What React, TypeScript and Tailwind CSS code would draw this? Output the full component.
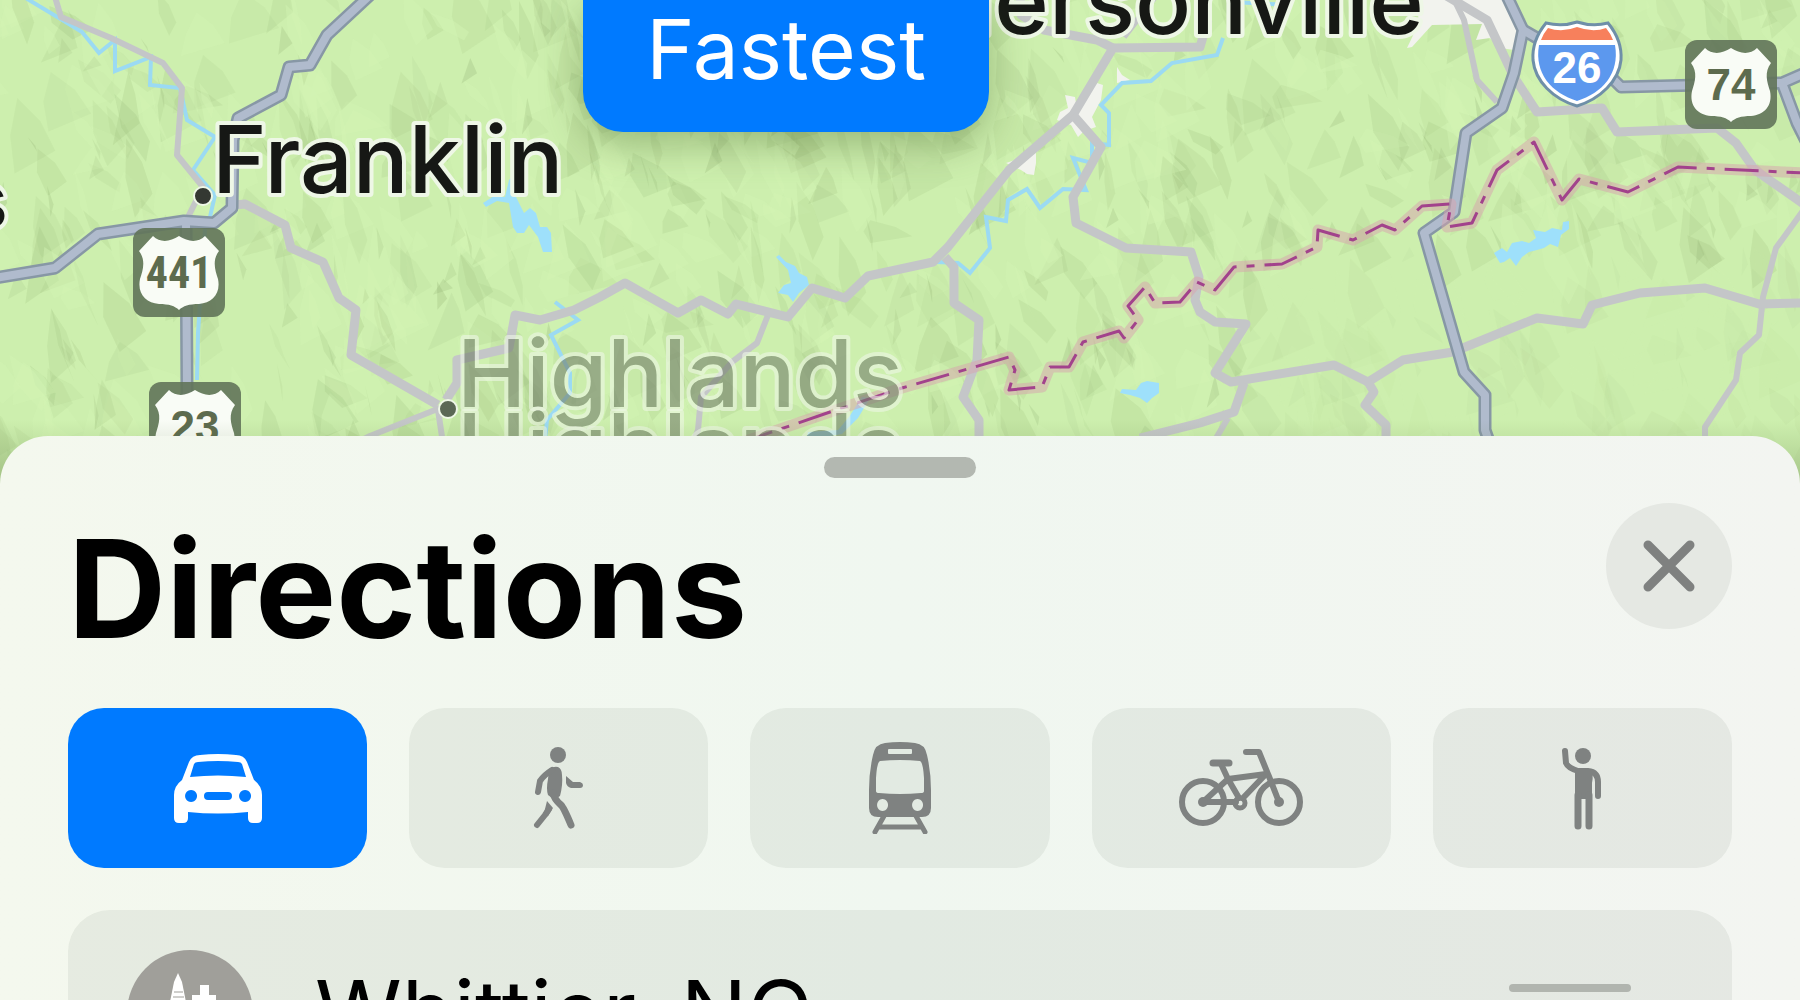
import { useState } from 'react'
import type { ReactNode } from 'react'

const highways = [
  'M-5 278 L55 268 L98 234 L184 221 L214 223 L232 208 L233 140 L238 118 L281 95 L289 67 L310 65 L327 35 L370 -5',
  'M186 222 L187 393 L189 450',
  'M1505 -8 L1523 30 L1514 73 L1502 108 L1466 133 L1454 212 L1424 233 L1464 372 L1485 395 L1485 430 L1492 450',
  'M1523 30 L1537 38 L1606 72 L1621 87 L1782 83 L1805 73',
  'M1782 83 L1797 123 L1808 145',
]

const roads = [
  'M235 205 L245 204 L285 225 L291 248 L323 262 L339 298 L356 310 L351 355 L438 405',
  'M446 400 L457 383 L457 360 L509 348 L515 315 L540 320 L574 310 L600 297 L625 283 L678 313 L701 300 L728 314 L736 304 L788 317 L812 288 L845 298 L868 276 L933 262 L948 247 L1009 170 L1073 115 L1113 48 L1200 47 L1208 20',
  'M1113 48 L1097 40 L1044 30 L1021 15 L1020 -5',
  'M945 257 L954 267 L954 303 L979 320 L977 360 L963 397 L979 420 L979 450',
  'M1073 115 L1101 147 L1073 197 L1076 223 L1126 248 L1191 252 L1199 277 L1195 300 L1200 312 L1215 322 L1246 324 L1215 373 L1231 382 L1334 365 L1368 382 L1403 360 L1453 352 L1537 318 L1583 324 L1592 305 L1640 293 L1705 288 L1759 304 L1805 303',
  'M1244 383 L1234 412 L1200 423 L1140 438',
  'M1368 382 L1374 392 L1365 405 L1386 425 L1386 450',
  'M1445 -5 L1487 20 L1514 77 L1537 112 L1602 108 L1617 132 L1717 128 L1736 143 L1755 170 L1805 205',
]

const lanes = [
  'M55 -3 L61 17 L111 38 L163 63 L182 88 L177 155 L203 187 L188 217',
  'M440 408 L370 436 L350 446',
  'M438 410 L444 450',
  'M768 315 L757 343 L732 362 L701 397 L698 430 L690 450',
  'M1124 37 L1155 -3',
  'M1228 418 L1212 445',
  'M1805 208 L1776 248 L1763 297 L1759 335 L1740 353 L1736 380 L1705 427 L1705 450',
  'M1453 -3 L1464 20 L1477 80 L1497 102',
]

const rivers = [
  'M24 -3 L59 18 L82 32 L99 53 L115 40 L115 71 L151 57 L150 85 L180 88 L187 120 L215 137 L193 170 L215 195 L210 217 L205 230 L198 333 L197 380',
  'M555 302 L578 320 L551 335 L570 373 L570 393 L547 420 L545 440',
  'M937 262 L958 263 L970 273 L990 248 L986 217 L1006 221 L1008 200 L1027 189 L1040 208 L1063 189 L1086 190 L1073 158 L1092 163 L1092 143 L1109 145 L1109 113 L1101 105 L1122 83 L1151 81 L1172 63 L1217 55 L1223 38',
  'M1231 2 L1292 5',
]

const lakes = [
  '505,197 509,180 513,176 516,197 524,213 530,208 536,213 540,227 547,227 551,233 552,252 543,252 538,237 529,225 524,233 517,233 513,227 509,203 497,201 486,207 483,203 494,196',
  '776,257 779,255 786,262 795,266 799,273 807,277 809,285 799,293 793,302 788,295 778,293 784,285 791,283 788,270',
  '1120,393 1122,389 1136,390 1141,383 1147,381 1159,383 1159,393 1152,398 1147,403 1140,398 1130,395',
  '1494,253 1502,248 1507,252 1512,243 1522,241 1529,243 1536,238 1533,230 1545,232 1552,228 1562,230 1563,222 1569,221 1569,229 1561,235 1558,247 1550,244 1544,248 1537,250 1529,252 1522,257 1516,266 1510,258 1504,262 1500,263',
  '849,417 862,397 870,398 858,418 842,434 806,440 808,432 838,430',
]

const towns = [
  '1419,-5 1418,25 1407,48 1412,47 1432,25 1482,24 1476,40 1490,38 1500,48 1514,50 1520,30 1508,-5',
  '1065,95 1075,97 1076,103 1097,83 1103,85 1101,100 1092,117 1096,127 1084,131 1078,137 1071,125 1057,120 1060,112 1068,108',
  '1006,163 1036,153 1036,163 1034,175 1027,174 1021,170',
  '1117,67 1122,75 1130,80 1117,83',
]

const stateLine =
  'M740 443 L830 412 L902 388 L1009 357 L1015 370 L1009 390 L1042 387 L1050 367 L1069 367 L1083 342 L1119 331 L1124 338 L1138 320 L1128 306 L1145 287 L1155 303 L1180 302 L1197 282 L1215 290 L1234 267 L1282 264 L1317 247 L1318 230 L1353 240 L1382 225 L1395 230 L1422 206 L1451 204 L1447 227 L1472 223 L1497 170 L1534 142 L1562 200 L1579 179 L1628 192 L1678 167 L1805 173'

// Seeded so the hills land in the same place on every render
function makeHills() {
  let seed = 20
  const rand = () => {
    seed = (seed * 16807) % 2147483647
    return seed / 2147483647
  }
  const hills: { points: string; fill: string; opacity: number }[] = []
  for (let i = 0; i < 900; i++) {
    const x = rand() * 1840 - 20
    const y = rand() * 520 - 40
    const w = 10 + rand() * 34
    const h = 22 + rand() * 58
    const lean = rand() * 50 - 30
    const light = rand() < 0.45
    const calm = x > 1250 && y > 240
    hills.push({
      points: `${x},${y} ${x + w * 0.6},${y + h * 0.3} ${x + w},${y + h * 0.7} ${x + w * 0.4 + lean},${y + h} ${x + lean * 0.4},${y + h * 0.5}`,
      fill: light ? '#d3f5b3' : '#86a565',
      opacity: (light ? 0.45 : 0.06 + rand() * 0.09) * (calm ? 0.35 : 1),
    })
  }
  // Small sharp shadows on the steep slopes
  for (let i = 0; i < 170; i++) {
    const x = rand() * 1800
    const y = rand() * 440
    const h = 14 + rand() * 24
    const lean = rand() * 24 - 12
    const calm = x > 1250 && y > 240
    hills.push({
      points: `${x},${y} ${x + 4 + rand() * 7},${y + h * 0.6} ${x + lean},${y + h}`,
      fill: '#78955a',
      opacity: calm ? 0.04 : 0.08 + rand() * 0.1,
    })
  }
  return hills
}

const hills = makeHills()

function UsShield({ x, y, label, narrow }: { x: number; y: number; label: string; narrow?: boolean }) {
  return (
    <g transform={`translate(${x} ${y})`}>
      <rect width="92" height="89" rx="12" fill="#62745a" opacity="0.9" />
      <path
        d="M20 8 C27 15 37 14 46 8 C55 14 65 15 72 8 L86 23 C79 32 82 42 85 51 C88 66 79 75 66 76 C56 76 50 78 46 82 C42 78 36 76 26 76 C13 75 4 66 7 51 C10 42 13 32 6 23 Z"
        fill="#f9fcf6"
      />
      <text
        x="46"
        y="60"
        textAnchor="middle"
        fill="#5d6b4e"
        className={
          narrow
            ? "font-['Liberation_Sans_Narrow','Roboto_Condensed',Roboto,sans-serif] text-[44px] font-bold"
            : "font-['Liberation_Sans',sans-serif] text-[44px] font-bold"
        }
      >
        {label}
      </text>
    </g>
  )
}

function InterstateShield() {
  return (
    <g>
      <path
        d="M1546 23 Q1562 27 1577 22 Q1593 27 1608 23 C1617 34 1622 46 1621 60 C1619 81 1600 99 1577 106 C1553 99 1535 81 1533 60 C1532 46 1537 34 1546 23Z"
        fill="#fff"
        stroke="#6f8fa8"
        strokeWidth="3"
      />
      <path d="M1548 28 Q1562 33 1577 27 Q1593 33 1606 28 Q1611 34 1613 40 H1541 Q1543 34 1548 28Z" fill="#f7805c" />
      <path d="M1539 45 H1615 C1620 74 1602 93 1577 101 C1552 93 1534 74 1539 45Z" fill="#5c98ee" />
      <text x="1577" y="83" textAnchor="middle" fill="#fff" className="font-['Liberation_Sans',sans-serif] text-[44px] font-bold">
        26
      </text>
    </g>
  )
}

function TownLabel({ x, y, anchor = 'start', faded, small, children }: {
  x: number
  y: number
  anchor?: 'start' | 'end'
  faded?: boolean
  small?: boolean
  children: string
}) {
  return (
    <text
      x={x}
      y={y}
      textAnchor={anchor}
      fill={faded ? '#74806c' : '#161815'}
      stroke="#eef7e6"
      strokeWidth="8"
      strokeLinejoin="round"
      paintOrder="stroke"
      opacity={faded ? 0.6 : 1}
      className={small ? 'text-[76px] font-medium' : 'text-[93px] font-medium'}
    >
      {children}
    </text>
  )
}

function RouteMap() {
  return (
    <svg viewBox="0 0 1800 488" className="block w-full" role="img" aria-label="Route map">
      <defs>
        <linearGradient id="mapEdge" x1="0" y1="0" x2="0" y2="1">
          <stop offset="0" stopColor="#5f7a45" stopOpacity="0" />
          <stop offset="1" stopColor="#5f7a45" stopOpacity="0.35" />
        </linearGradient>
      </defs>
      <rect width="1800" height="488" fill="#cdefae" />
      {hills.map((hill, i) => (
        <polygon key={i} points={hill.points} fill={hill.fill} opacity={hill.opacity} />
      ))}
      {towns.map((points) => <polygon key={points} points={points} fill="#f2f3ee" />)}
      {rivers.map((d) => <path key={d} d={d} fill="none" stroke="#9bdaf3" strokeWidth="4" />)}
      {lakes.map((points) => <polygon key={points} points={points} fill="#9ee0fb" />)}
      <g fill="none" stroke="#c4c6c8" strokeLinejoin="round">
        {lanes.map((d) => <path key={d} d={d} strokeWidth="6" />)}
        {roads.map((d) => <path key={d} d={d} strokeWidth="9" />)}
      </g>
      <g fill="none" strokeLinejoin="round">
        {highways.map((d) => <path key={d} d={d} stroke="#8797a5" strokeWidth="13" />)}
        {highways.map((d) => <path key={d} d={d} stroke="#b0bbcd" strokeWidth="8" />)}
        <path d={stateLine} stroke="#d7a3ae" strokeWidth="11" opacity="0.5" />
        <path d={stateLine} stroke="#a2428c" strokeWidth="3" strokeDasharray="34 10 8 10" />
      </g>

      <UsShield x={133} y={228} label="441" narrow />
      <UsShield x={149} y={382} label="23" />
      <UsShield x={1685} y={40} label="74" />
      <InterstateShield />

      <circle cx="203" cy="196" r="9" fill="#343832" stroke="#eef7e6" strokeWidth="2" />
      <circle cx="448" cy="409" r="9" fill="#5b6855" stroke="#eef7e6" strokeWidth="2" />
      <TownLabel x={212} y={193}>Franklin</TownLabel>
      <TownLabel x={1424} y={34} anchor="end">Hendersonville</TownLabel>
      <TownLabel x={8} y={228} anchor="end" small>Robbins</TownLabel>
      <TownLabel x={457} y={407} faded>Highlands</TownLabel>
      <TownLabel x={457} y={481} faded>Highlands</TownLabel>
      <rect y="420" width="1800" height="68" fill="url(#mapEdge)" />
    </svg>
  )
}

function CarIcon() {
  return (
    <svg viewBox="0 0 90 72" className="h-[72px] w-[90px]" fill="currentColor" aria-hidden="true">
      <path
        fillRule="evenodd"
        d="M9 28 L16 10 Q19 3 27 3 Q45 1 63 3 Q71 3 74 10 L81 28 Q89 34 89 43 V66 Q89 71 84 71 H80 Q75 71 75 66 V60 Q45 63 15 60 V66 Q15 71 10 71 H6 Q1 71 1 66 V43 Q1 34 9 28Z M17 25 Q45 22 73 25 L69 12 Q68 10 65 10 Q45 8 25 10 Q22 10 21 12Z M18 38 a6 6 0 1 0 0.1 0Z M72 38 a6 6 0 1 0 0.1 0Z M35 40 H55 a4 4 0 0 1 0 8 H35 a4 4 0 0 1 0 -8Z"
      />
    </svg>
  )
}

function WalkIcon() {
  return (
    <svg viewBox="0 0 52 82" className="h-[82px] w-[52px]" fill="none" stroke="currentColor" strokeLinecap="round" strokeLinejoin="round" aria-hidden="true">
      <circle cx="25" cy="8" r="8" fill="currentColor" stroke="none" />
      <path d="M16 22 Q21 19 25 20 Q29 22 29 28 Q30 38 27 49 Q21 54 15 48 Q13 42 15 32Z" fill="currentColor" stroke="none" />
      <path d="M19 23 Q11 28 7 34 L5 45" strokeWidth="6" />
      <path d="M20 46 Q21 52 28 58 Q31 61 38 78" strokeWidth="7" />
      <path d="M16 62 L12 68 L4 78" strokeWidth="6" />
      <path d="M14 54 L20 61 L15 69 L11 66Z" fill="currentColor" stroke="none" />
      <path d="M33 29 L40 35 H47 Q50 36 50 38 Q50 41 47 41 H38 Q34 40 33 36Z" fill="currentColor" stroke="none" />
    </svg>
  )
}

function TramIcon() {
  return (
    <svg viewBox="0 0 64 92" className="h-[92px] w-[64px]" fill="currentColor" aria-hidden="true">
      <path
        fillRule="evenodd"
        d="M17 1 Q32 -1 47 1 Q57 2 59 13 Q63 30 63 48 V66 Q63 75 54 75 H10 Q1 75 1 66 V48 Q1 30 5 13 Q7 2 17 1Z M21 7 Q20 7 20 8 V11 Q20 12 21 12 H43 Q44 12 44 11 V8 Q44 7 43 7Z M12 19 Q9 20 8 36 V49 Q8 51 11 51 Q32 53 53 51 Q56 51 56 49 V36 Q55 20 52 19 Q32 17 12 19Z M14.500 57 a5.500 6 0 1 0 0.1 0Z M49.500 57 a5.500 6 0 1 0 0.1 0Z"
      />
      <path d="M16 74 L7 90 M48 74 L57 90 M11 85 H53" stroke="currentColor" strokeWidth="5" strokeLinecap="round" />
    </svg>
  )
}

function BikeIcon() {
  return (
    <svg viewBox="0 0 126 80" className="h-[80px] w-[126px]" fill="none" stroke="currentColor" strokeWidth="6" strokeLinecap="round" strokeLinejoin="round" aria-hidden="true">
      <circle cx="25" cy="54" r="21" />
      <circle cx="101" cy="54" r="21" />
      <path d="M68 4 H81 L92 31 L101 54" />
      <path d="M35 15 H51" strokeWidth="7" />
      <path d="M43 16 L50 31 L61 50 M50 31 L88 26 L65 50 M50 31 L25 54 H58" strokeWidth="6" />
      <circle cx="25" cy="54" r="5" fill="currentColor" stroke="none" />
      <circle cx="101" cy="54" r="5" fill="currentColor" stroke="none" />
      <circle cx="62" cy="55" r="5" strokeWidth="5" />
    </svg>
  )
}

function RideshareIcon() {
  return (
    <svg viewBox="0 0 42 83" className="h-[83px] w-[42px]" fill="none" stroke="currentColor" strokeLinecap="round" strokeLinejoin="round" aria-hidden="true">
      <circle cx="22" cy="9" r="8" fill="currentColor" stroke="none" />
      <path d="M4 4 L5 16 Q7 21 17 24 H27 Q37 25 37 35 V49" strokeWidth="6" />
      <path d="M14 22 H29 Q33 28 31 36 V52 H14Z" fill="currentColor" stroke="none" />
      <path d="M17 48 V79 M28 48 V79" strokeWidth="7" />
    </svg>
  )
}

function CityIcon() {
  return (
    <svg viewBox="0 0 126 126" className="size-[126px] shrink-0" aria-hidden="true">
      <circle cx="63" cy="63" r="63" fill="#a09f9a" />
      <g fill="#fff">
        <path d="M51 23 L55 32 L61 62 H41 L47 32Z" />
        <path d="M65 45 H73 V35 H82 V45 H89 V95 H65Z" />
        <path d="M38 60 H62 V95 H38Z" />
      </g>
      <path d="M47 42 H56 M46 47 H57" stroke="#a09f9a" strokeWidth="1" />
    </svg>
  )
}

const modes: { id: string; label: string; icon: ReactNode }[] = [
  { id: 'drive', label: 'Drive', icon: <CarIcon /> },
  { id: 'walk', label: 'Walk', icon: <WalkIcon /> },
  { id: 'transit', label: 'Transit', icon: <TramIcon /> },
  { id: 'cycle', label: 'Cycle', icon: <BikeIcon /> },
  { id: 'rideshare', label: 'Rideshare', icon: <RideshareIcon /> },
]

export default function App() {
  const [mode, setMode] = useState('drive')

  return (
    <div className="flex h-screen flex-col overflow-hidden bg-[#f2f7ef] font-[Inter,sans-serif] text-black">
      {/* Map */}
      <section className="relative shrink-0 overflow-hidden">
        <RouteMap />
        <button className="absolute top-0 left-[32.4%] flex h-[132px] w-[406px] justify-center rounded-b-[40px] bg-[#007aff] text-[82px] leading-[100px] text-white shadow-[0_12px_40px_rgba(70,100,40,0.4)]">
          Fastest
        </button>
      </section>

      {/* Directions sheet */}
      <main className="relative -mt-[52px] flex grow flex-col rounded-t-[48px] bg-linear-to-r from-[#f4f8ee] via-[#f0f7f0] to-[#f3f5f1] px-[68px]">
        <div className="mx-auto mt-[21px] h-[21px] w-[152px] shrink-0 rounded-full bg-[#b3b8b1]" />

        <header className="mt-[25px] flex items-start justify-between">
          <h1 className="pt-3 text-[136px] leading-[148px] font-bold">Directions</h1>
          <button aria-label="Close" className="flex size-[126px] items-center justify-center rounded-full bg-[#e5e8e3] text-[#7f8180]">
            <svg viewBox="0 0 52 52" className="size-[52px]" fill="none" stroke="currentColor" strokeWidth="9" strokeLinecap="round" aria-hidden="true">
              <path d="M5 5 L47 47 M47 5 L5 47" />
            </svg>
          </button>
        </header>

        <nav className="mt-[45px] grid grid-cols-5 gap-[42px]" aria-label="Travel mode">
          {modes.map((item) => (
            <button
              key={item.id}
              aria-label={item.label}
              aria-pressed={mode === item.id}
              onClick={() => setMode(item.id)}
              className={
                mode === item.id
                  ? 'flex h-[160px] items-center justify-center rounded-[36px] bg-[#007aff] text-white'
                  : 'flex h-[160px] items-center justify-center rounded-[36px] bg-[#161c14]/6 text-[#7f8281]'
              }
            >
              {item.icon}
            </button>
          ))}
        </nav>

        {/* Stops */}
        <ul className="mt-[42px] shrink-0 rounded-t-[42px] bg-[#161c14]/6">
          <li className="flex items-start pt-10 pr-[101px] pl-[59px]">
            <CityIcon />
            <span className="ml-[62px] grow pt-2 text-[88px] leading-[108px]">Whittier, NC</span>
            <button aria-label="Reorder stop" className="mt-[34px] flex w-[122px] flex-col gap-4">
              <span className="h-2 rounded-full bg-[#b1b5af]" />
              <span className="h-2 rounded-full bg-[#b1b5af]" />
              <span className="h-2 rounded-full bg-[#b1b5af]" />
            </button>
          </li>
        </ul>
      </main>
    </div>
  )
}
